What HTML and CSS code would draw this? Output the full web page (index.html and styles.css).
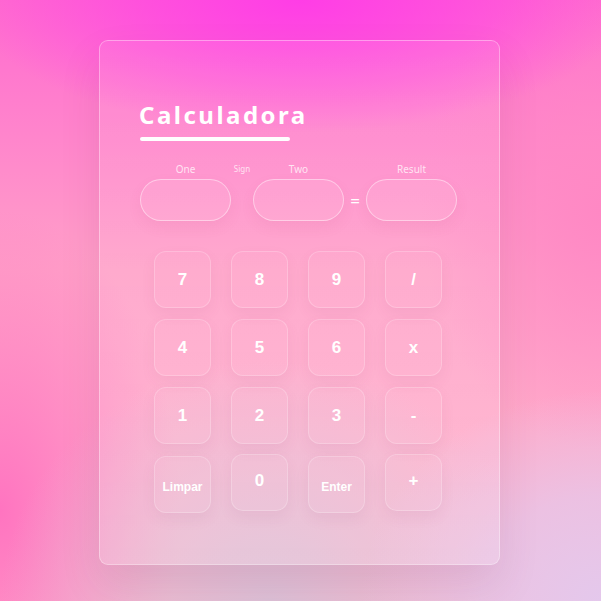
FILE: index.html
```html
<!DOCTYPE html>
<html lang="pt">
<head>
<meta charset="utf-8">
<title>Calculadora</title>
<link rel="stylesheet" href="styles.css">
</head>
<body>
<main class="card">
  <h1 class="title">Calculadora</h1>
  <div class="underline"></div>
  <div class="fields">
    <div class="field">
      <span class="label">One</span>
      <div class="input"></div>
    </div>
    <div class="sign">Sign</div>
    <div class="field">
      <span class="label">Two</span>
      <div class="input"></div>
    </div>
    <div class="equals">=</div>
    <div class="field">
      <span class="label">Result</span>
      <div class="input"></div>
    </div>
  </div>
  <div class="keypad">
    <button class="key">7</button>
    <button class="key">8</button>
    <button class="key">9</button>
    <button class="key">/</button>
    <button class="key">4</button>
    <button class="key">5</button>
    <button class="key">6</button>
    <button class="key">x</button>
    <button class="key">1</button>
    <button class="key">2</button>
    <button class="key">3</button>
    <button class="key">-</button>
    <button class="key key-small low">Limpar</button>
    <button class="key high">0</button>
    <button class="key key-small low">Enter</button>
    <button class="key high">+</button>
  </div>
</main>
</body>
</html>
```
FILE: styles.css
```css
html, body {
  margin: 0;
  padding: 0;
  height: 100%;
}
body {
  box-sizing: border-box;
  width: 601px;
  height: 601px;
  padding-right: 2px;
  overflow: hidden;
  display: flex;
  justify-content: center;
  align-items: flex-start;
  font-family: "Liberation Sans", Arial, sans-serif;
  background-color: #ffa2c8;
  background-image:
    radial-gradient(ellipse 55% 22% at 50% 0%, #ff3de6 0%, rgba(255,61,230,0.6) 45%, rgba(255,61,230,0) 100%),
    radial-gradient(ellipse 40% 35% at 100% 100%, #e4c8ec 0%, rgba(228,200,236,0.7) 50%, rgba(228,200,236,0) 100%),
    radial-gradient(ellipse 45% 40% at 45% 100%, #dcc0d6 0%, rgba(220,192,214,0) 100%),
    radial-gradient(ellipse 30% 50% at 0% 85%, #ff74c0 0%, rgba(255,116,192,0) 100%),
    radial-gradient(ellipse 30% 40% at 100% 35%, #ff88c4 0%, rgba(255,136,196,0) 100%),
    linear-gradient(180deg, #ff6ad0 0%, #ffa0c8 45%, #ffb6cc 100%);
}
.card {
  margin-top: 40px;
  width: 399px;
  height: 523px;
  box-sizing: content-box;
  border: 1px solid rgba(255,255,255,0.35);
  border-radius: 9px;
  background: linear-gradient(180deg, rgba(255,255,255,0.08) 0%, rgba(255,255,255,0.14) 100%);
  box-shadow: 0 20px 40px rgba(120, 40, 90, 0.12);
  padding: 0;
  display: flex;
  flex-direction: column;
}
.title {
  margin: 59px 0 0 39px;
  font-family: "Noto Sans", "Open Sans", sans-serif;
  font-weight: 700;
  font-size: 24px;
  line-height: 30px;
  letter-spacing: 2.5px;
  color: #fff;
}
.underline {
  margin: 7px 0 0 40px;
  width: 150px;
  height: 4px;
  border-radius: 2px;
  background: #fff;
}
.fields {
  margin: 21px 0 0 40px;
  display: flex;
  align-items: flex-end;
}
.field {
  display: flex;
  flex-direction: column;
  align-items: center;
}
.label {
  font-family: "Noto Sans", "Open Sans", sans-serif;
  font-size: 10px;
  line-height: 14px;
  color: rgba(255,255,255,0.75);
  margin-bottom: 3px;
}
.input {
  width: 89px;
  height: 40px;
  border: 1px solid rgba(255,255,255,0.45);
  border-radius: 21px;
  background: rgba(255,255,255,0.08);
  box-shadow: 0 6px 14px rgba(180, 60, 120, 0.08);
}
.sign {
  align-self: flex-start;
  width: 22px;
  margin-top: 1px;
  font-family: "Noto Sans", "Open Sans", sans-serif;
  font-size: 8px;
  line-height: 12px;
  color: rgba(255,255,255,0.75);
  text-align: center;
}
.equals {
  width: 22px;
  height: 42px;
  display: flex;
  align-items: center;
  justify-content: center;
  color: #fff;
  font-size: 17px;
  font-family: "Noto Sans", sans-serif;
}
.keypad {
  margin: 30px 0 0 54px;
  display: grid;
  grid-template-columns: repeat(4, 57px);
  grid-auto-rows: 57px;
  column-gap: 20px;
  row-gap: 11px;
}
.key {
  box-sizing: border-box;
  width: 57px;
  height: 57px;
  padding: 0;
  border: 1px solid rgba(255,255,255,0.22);
  border-radius: 12px;
  background: rgba(255,255,255,0.03);
  box-shadow: 0 6px 14px rgba(150, 60, 110, 0.08);
  color: #fff;
  font-family: "Liberation Sans", Arial, sans-serif;
  font-weight: 700;
  font-size: 17px;
  display: flex;
  align-items: center;
  justify-content: center;
}
.key-small {
  font-size: 12px;
}
.low {
  padding-top: 4px;
  margin-top: 1px;
}
.high {
  margin-top: -1px;
  padding-bottom: 4px;
}
```
